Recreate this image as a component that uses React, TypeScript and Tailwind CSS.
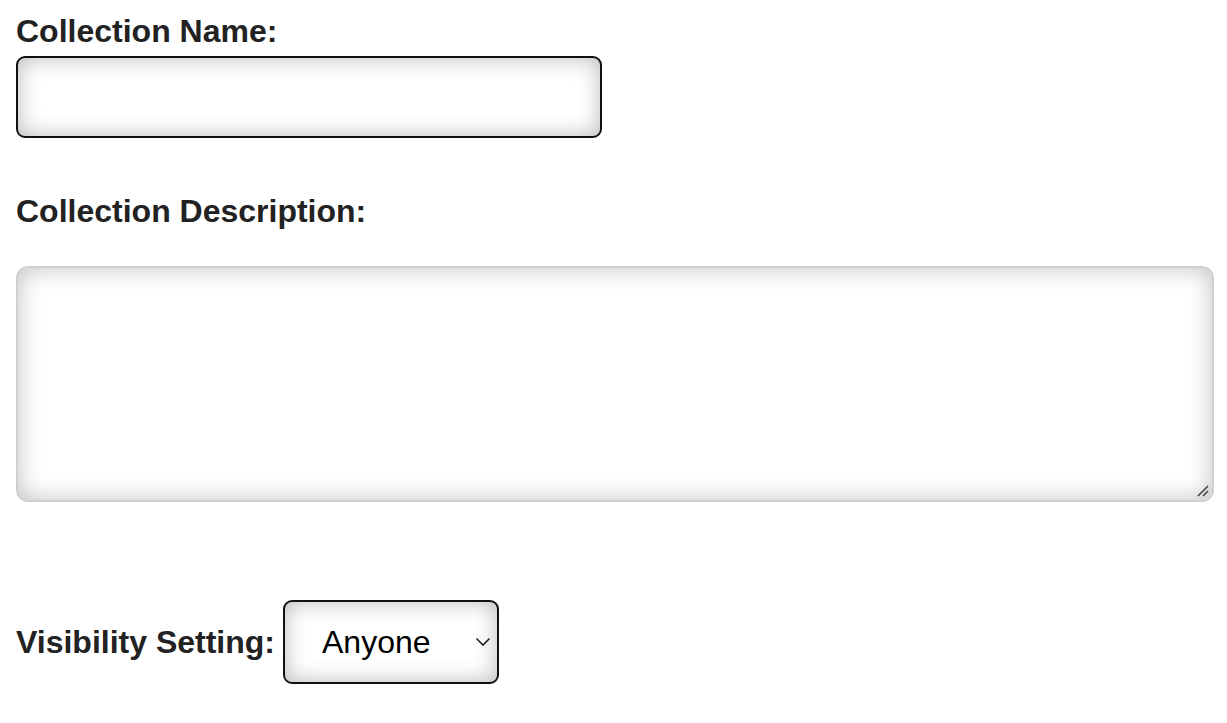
export default function App() {
  return (
    <div className="min-h-screen bg-white px-4 pt-[11px] font-['Liberation_Sans',Arial,sans-serif] text-[#222]">
      <label className="block text-[32px] font-bold leading-[40px]">Collection Name:</label>
      <input
        type="text"
        className="mt-[5px] block h-[82px] w-[586px] rounded-[9px] border-2 border-[#111] bg-white px-4 text-[30px] shadow-[inset_0_0_22px_rgba(0,0,0,0.28)] outline-none"
      />

      <label className="mt-[53px] block text-[32px] font-bold leading-[40px]">Collection Description:</label>
      <div className="relative mt-[35px] w-[1198px]">
        <textarea className="block h-[236px] w-full resize-none rounded-[12px] border-2 border-[#d0d0d0] bg-white p-4 text-[30px] shadow-[inset_0_0_24px_rgba(0,0,0,0.25)] outline-none" />
        {/* resize grip */}
        <svg
          className="pointer-events-none absolute bottom-[4px] right-[4px]"
          width="14"
          height="14"
          viewBox="0 0 14 14"
          fill="none"
          stroke="#444"
          strokeWidth="1.6"
        >
          <path d="M2 12 L12 2" />
          <path d="M7 12 L12 7" />
        </svg>
      </div>

      <div className="mt-[98px] flex items-center gap-[8px]">
        <label className="text-[32px] font-bold leading-[40px]">Visibility Setting:</label>
        <div className="relative">
          <select
            defaultValue="Anyone"
            className="block h-[84px] w-[216px] appearance-none rounded-[9px] border-2 border-[#111] bg-white pl-[37px] text-[32px] text-black shadow-[inset_0_0_22px_rgba(0,0,0,0.28)] outline-none"
          >
            <option>Anyone</option>
            <option>Only Me</option>
          </select>
          <svg
            className="pointer-events-none absolute right-[8px] top-[37px]"
            width="16"
            height="10"
            viewBox="0 0 16 10"
            fill="none"
            stroke="#222"
            strokeWidth="1.6"
          >
            <path d="M1.5 1.5 L8 8 L14.5 1.5" />
          </svg>
        </div>
      </div>
    </div>
  );
}
